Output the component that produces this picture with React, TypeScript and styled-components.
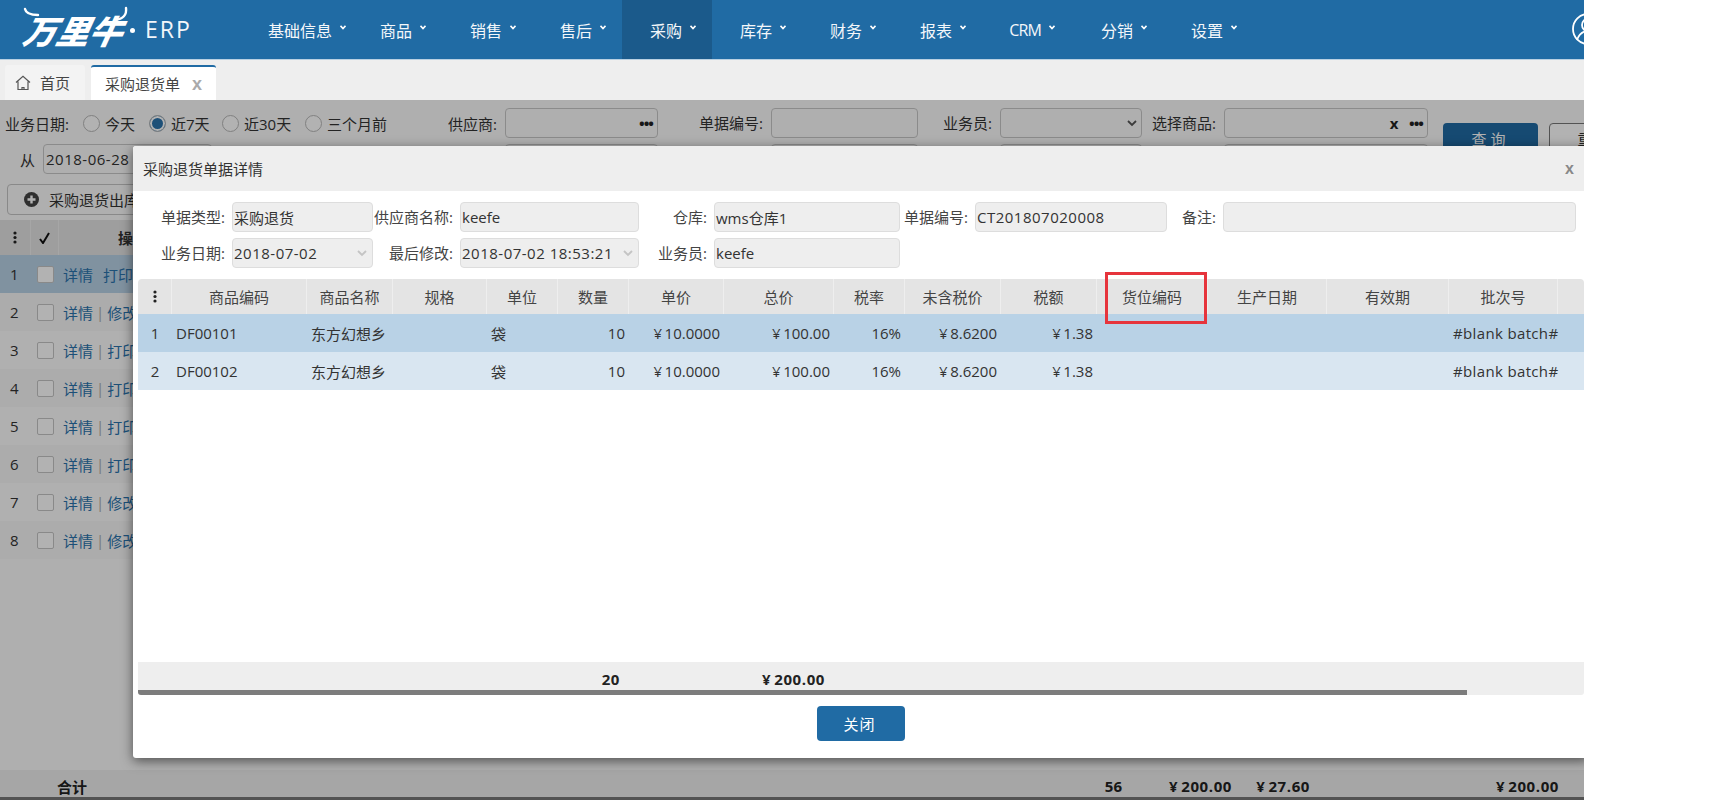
import React from "react";
import styled, { createGlobalStyle } from "styled-components";

const FONT = `"Open Sans", "Noto Sans CJK SC", sans-serif`;
const MODAL_COLS = "34px 135px 86px 94px 71px 71px 95px 110px 71px 96px 96px 111px 119px 122px 109px 26px";

const Global = createGlobalStyle`
  html, body { margin: 0; padding: 0; background: #fff; }
  body { font-family: ${FONT}; font-size: 15px; color: #333; }
`;

const Page = styled.div`
  position: relative;
  width: 1584px;
  height: 800px;
  overflow: hidden;
  background: #fbfbfb;
`;

const Header = styled.header`
  display: flex;
  height: 60px;
  background: #206ba4;
  border-bottom: 1px solid #b9d0e2;
  box-sizing: border-box;
  color: #fff;
`;

const Logo = styled.div`
  position: relative;
  width: 240px;
  flex: none;
  display: flex;
  align-items: center;
  padding-left: 24px;
  box-sizing: border-box;
`;

const LogoMark = styled.span`
  font: italic 900 33px/1 "Noto Sans CJK SC", sans-serif;
  letter-spacing: 0;
  transform: skewX(-12deg);
  color: #fff;
  margin-top: 2px;
`;

const LogoSwoosh = styled.svg`
  position: absolute;
  left: 20px;
  top: 6px;
`;

const LogoDot = styled.span`
  width: 5px;
  height: 5px;
  border-radius: 50%;
  background: #fff;
  margin: 2px 10px 0 7px;
`;

const LogoErp = styled.span`
  font: 400 23px/1 "Open Sans", sans-serif;
  color: #f2f6fa;
  letter-spacing: 2px;
`;

const NavItem = styled.div<{ $active?: boolean; $tight?: boolean; $latin?: boolean }>`
  display: flex;
  align-items: center;
  height: 59px;
  padding: 0 ${(p) => (p.$tight ? 6 : p.$latin ? 18 : 16)}px 0 ${(p) => (p.$latin ? 27 : 28)}px;
  background: ${(p) => (p.$active ? "#1b5a8b" : "transparent")};
  font-size: 16px;
  letter-spacing: ${(p) => (p.$latin ? "-.8px" : "0")};
  color: #f4f7fa;
`;

const NavCaret = styled.svg`
  margin-left: 8px;
  margin-top: -4px;
`;

const Avatar = styled.svg`
  margin: 13px -20px 0 auto;
  flex: none;
`;

const TabBar = styled.div`
  display: flex;
  align-items: flex-end;
  height: 40px;
  background: #eeeeee;
  padding-left: 5px;
  gap: 6px;
  box-sizing: border-box;
`;

const HomeTab = styled.div`
  display: flex;
  align-items: center;
  gap: 9px;
  width: 80px;
  height: 35px;
  padding-left: 10px;
  box-sizing: border-box;
  background: #f3f3f3;
  border-radius: 3px 3px 0 0;
  color: #444;
`;

const ActiveTab = styled.div`
  display: flex;
  align-items: center;
  width: 125px;
  height: 35px;
  padding-left: 14px;
  box-sizing: border-box;
  background: #fff;
  border-top: 2px solid #206ba4;
  border-radius: 3px 3px 0 0;
  color: #444;
`;

const TabClose = styled.span`
  margin-left: 12px;
  font: 700 18px/1 "Liberation Sans", sans-serif;
  color: #aaa;
`;

const Backdrop = styled.div`
  display: flex;
  flex-direction: column;
  height: 700px;
`;

const Filter = styled.div`
  display: grid;
  grid-template-columns: 505px 153px 113px 147px 82px 142px 82px 204px 15px 95px 11px 95px;
  grid-auto-rows: 30px;
  row-gap: 6px;
  padding-top: 8px;
`;

const RadioGroup = styled.div`
  display: flex;
  align-items: center;
  padding-left: 5px;
  white-space: nowrap;
`;

const RangeGroup = styled.div`
  grid-row: 2;
  grid-column: 1;
  display: flex;
  align-items: center;
  padding-left: 20px;
  gap: 8px;
`;

const RadioLabel = styled.span`
  width: 78px;
  flex: none;
`;

const SupplierLabel = styled.span`
  margin-left: auto;
  padding-right: 8px;
`;

const Radio = styled.span<{ $on?: boolean }>`
  width: 17px;
  height: 17px;
  box-sizing: border-box;
  border: 1px solid #b8b8b8;
  border-radius: 50%;
  background: ${(p) => (p.$on ? "#2a73ad" : "#fff")};
  box-shadow: ${(p) => (p.$on ? "inset 0 0 0 2px #fff" : "none")};
  margin-right: 5px;
  flex: none;
`;

const RadioText = styled.span<{ $w: number }>`
  width: ${(p) => p.$w}px;
  flex: none;
`;

const FilterLabel = styled.span`
  text-align: right;
  padding-right: 8px;
  line-height: 30px;
`;

const FilterInput = styled.div<{ $w?: number; $col?: number }>`
  display: flex;
  align-items: center;
  justify-content: flex-end;
  box-sizing: border-box;
  height: 30px;
  width: ${(p) => (p.$w ? `${p.$w}px` : "auto")};
  grid-column: ${(p) => p.$col ?? "auto"};
  padding: 0 4px 0 2px;
  border: 1px solid #c8c8c8;
  border-radius: 4px;
  background: #fbfbfb;
  font-weight: 700;
  font-size: 15px;
  letter-spacing: -1px;
  color: #222;
  white-space: pre;
`;

const DateText = styled.span`
  margin-right: auto;
  font-weight: 400;
  font-size: 15px;
  letter-spacing: .5px;
  color: #333;
`;

const QueryButton = styled.div`
  grid-row: 1 / 3;
  grid-column: 10;
  margin-top: 15px;
  height: 30px;
  background: #206ba4;
  color: #fff;
  border-radius: 4px;
  display: flex;
  align-items: center;
  justify-content: center;
  letter-spacing: 4px;
  white-space: nowrap;
`;

const ResetButton = styled(QueryButton)`
  grid-column: 12;
  background: #fff;
  color: #333;
  border: 1px solid #777;
  box-sizing: border-box;
`;

const Toolbar = styled.div`
  padding: 10px 0 5px 7px;
`;

const ToolButton = styled.div`
  display: flex;
  align-items: center;
  gap: 10px;
  width: 160px;
  height: 31px;
  box-sizing: border-box;
  padding-left: 16px;
  border: 1px solid #c4c4c4;
  border-radius: 4px;
  background: #fbfbfb;
  white-space: nowrap;
`;

const BgHead = styled.div`
  display: grid;
  grid-template-columns: 31px 28px 1fr;
  height: 35px;
  background: #e3e3e3;
  align-items: center;
`;

const BgHeadCell = styled.div<{ $pad?: number }>`
  height: 100%;
  display: flex;
  align-items: center;
  justify-content: ${(p) => (p.$pad ? "flex-start" : "center")};
  padding-left: ${(p) => p.$pad ?? 0}px;
  border-right: 1px solid #eee;
  font-weight: 700;
`;

const BgRow = styled.div<{ $sel?: boolean; $even?: boolean }>`
  display: flex;
  align-items: center;
  height: 38px;
  flex: none;
  background: ${(p) => (p.$sel ? "#b8d1e5" : p.$even ? "#f6f6f6" : "#fcfcfc")};
`;

const BgIndex = styled.span`
  width: 37px;
  padding-left: 10px;
  box-sizing: border-box;
  flex: none;
`;

const BgCheck = styled.span`
  width: 17px;
  height: 17px;
  box-sizing: border-box;
  border: 1px solid #c4c4c4;
  border-radius: 2px;
  background: #fff;
  flex: none;
  margin-right: 9px;
`;

const BgLink = styled.span`
  color: #2a73ad;
  white-space: nowrap;
`;

const BgSep = styled.span`
  color: #aaa;
  margin: 0 3px;
`;

const BgSpacer = styled.div`
  flex: 1;
`;

const SumRow = styled.div`
  display: grid;
  grid-template-columns: 1122px 110px 78px 249px;
  height: 27px;
  padding-top: 5px;
  box-sizing: border-box;
  flex: none;
  align-items: center;
  background: #eeeeee;
  font-weight: 700;
  color: #222;
`;

const SumFirst = styled.div`
  display: flex;
  justify-content: space-between;
  padding-left: 57px;
`;

const SumValue = styled.div`
  text-align: right;
  letter-spacing: .6px;
`;

const BgScroll = styled.div`
  height: 3px;
  flex: none;
  background: #777;
`;

const Overlay = styled.div`
  position: absolute;
  left: 0;
  right: 0;
  top: 100px;
  bottom: 0;
  background: rgba(0, 0, 0, 0.3);
`;

const Modal = styled.div`
  position: absolute;
  left: 133px;
  top: 146px;
  width: 1456px;
  height: 612px;
  display: flex;
  flex-direction: column;
  background: #fff;
  border-radius: 3px;
  box-shadow: 0 3px 12px rgba(0, 0, 0, 0.55);
`;

const ModalTitle = styled.div`
  display: flex;
  align-items: center;
  justify-content: space-between;
  height: 45px;
  flex: none;
  padding: 0 15px 0 10px;
  background: #eeeeee;
  border-radius: 3px 3px 0 0;
`;

const ModalClose = styled.span`
  font: 700 16px/1 "Liberation Sans", sans-serif;
  color: #888;
`;

const Form = styled.div`
  display: grid;
  grid-template-columns: 99px 141px 87px 179px 75px 186px 75px 192px 56px 353px;
  grid-auto-rows: 30px;
  row-gap: 6px;
  padding-top: 11px;
  flex: none;
`;

const FormLabel = styled.span`
  text-align: right;
  padding-right: 7px;
  line-height: 30px;
  white-space: nowrap;
  color: #444;
`;

const FormInput = styled.div<{ $num?: boolean }>`
  display: flex;
  align-items: center;
  justify-content: space-between;
  box-sizing: border-box;
  height: 30px;
  padding: 0 5px 0 1px;
  background: #eeeeee;
  border: 1px solid #dddddd;
  border-radius: 4px;
  color: #333;
  white-space: nowrap;
  letter-spacing: ${(p) => (p.$num ? ".5px" : "0")};
`;

const DetailGrid = styled.div`
  margin: 11px 0 0 5px;
  width: 1446px;
  height: 416px;
  flex: none;
  display: flex;
  flex-direction: column;
`;

const GridRow = styled.div<{ $bg: string; $h: number }>`
  display: grid;
  grid-template-columns: ${MODAL_COLS};
  height: ${(p) => p.$h}px;
  flex: none;
  background: ${(p) => p.$bg};
  align-items: center;
`;

const HeadRow = styled(GridRow)`
  border-radius: 4px 4px 0 0;
`;

const HeadCell = styled.div`
  position: relative;
  height: 100%;
  display: flex;
  align-items: center;
  justify-content: center;
  border-right: 1px solid #eeeeee;
  box-sizing: border-box;
  color: #444;
  &:last-child { border-right: 0; }
`;

const RedBox = styled.span`
  position: absolute;
  left: 8px;
  right: 0;
  top: -7px;
  bottom: -10px;
  border: 3px solid #e6343c;
`;

const Cell = styled.div<{ $align?: string; $wide?: boolean }>`
  text-align: ${(p) => p.$align ?? "left"};
  padding: 0 4px;
  white-space: nowrap;
  color: #333;
  letter-spacing: ${(p) => (p.$wide ? ".35px" : "0")};
`;

const Filler = styled.div`
  flex: 1;
`;

const Footer = styled.div`
  position: relative;
  height: 33px;
  flex: none;
`;

const FooterCells = styled(GridRow)`
  height: 33px;
  box-sizing: border-box;
  border-radius: 0 0 3px 3px;
`;

const FootCell = styled.div`
  text-align: right;
  padding-right: 9px;
  font-weight: 700;
  color: #222;
  white-space: nowrap;
  letter-spacing: .6px;
`;

const ScrollThumb = styled.div`
  position: absolute;
  left: 0;
  bottom: 0;
  width: 1329px;
  height: 5px;
  background: #7c7c7c;
  border-radius: 0 0 0 3px;
`;

const ModalActions = styled.div`
  display: flex;
  justify-content: center;
  padding-top: 11px;
`;

const CloseButton = styled.div`
  width: 88px;
  height: 35px;
  display: flex;
  align-items: center;
  justify-content: center;
  padding-right: 3px;
  box-sizing: border-box;
  background: #206ba4;
  color: #fff;
  border-radius: 4px;
  letter-spacing: 1px;
`;

const Kebab = () => (
  <svg width="4" height="13" viewBox="0 0 4 13" fill="#222">
    <circle cx="2" cy="2" r="1.6" />
    <circle cx="2" cy="6.5" r="1.6" />
    <circle cx="2" cy="11" r="1.6" />
  </svg>
);

const Chevron = ({ c }: { c: string }) => (
  <svg width="10" height="7" viewBox="0 0 10 7" fill="none" stroke={c} strokeWidth="1.8">
    <path d="M1 1l4 4 4-4" />
  </svg>
);

const Caret = () => (
  <NavCaret width="6" height="5" viewBox="0 0 6 5" fill="none" stroke="#fff" strokeWidth="1.6">
    <path d="M.5 .8L3 3.6 5.5 .8" />
  </NavCaret>
);

const navItems = ["基础信息", "商品", "销售", "售后", "采购", "库存", "财务", "报表", "CRM", "分销", "设置"];
const bgRows: [string, string][] = [
  ["1", "打印"], ["2", "修改"], ["3", "打印"], ["4", "打印"],
  ["5", "打印"], ["6", "打印"], ["7", "修改"], ["8", "修改"],
];
const heads = ["商品编码", "商品名称", "规格", "单位", "数量", "单价", "总价", "税率", "未含税价", "税额", "货位编码", "生产日期", "有效期", "批次号", ""];
const YEN = "¥\u2009";
const lines = [
  ["1", "DF00101", "东方幻想乡", "", "袋", "10", `${YEN}10.0000`, `${YEN}100.00`, "16%", `${YEN}8.6200`, `${YEN}1.38`, "", "", "", "#blank batch#", ""],
  ["2", "DF00102", "东方幻想乡", "", "袋", "10", `${YEN}10.0000`, `${YEN}100.00`, "16%", `${YEN}8.6200`, `${YEN}1.38`, "", "", "", "#blank batch#", ""],
];
const rightCols = new Set([5, 6, 7, 8, 9, 10]);

export default function App() {
  return (
    <>
      <Global />
      <Page>
        <Header>
          <Logo>
            <LogoMark>万里牛</LogoMark>
            <LogoSwoosh width="110" height="24" viewBox="0 0 110 24" fill="none" stroke="#fff" strokeWidth="2.4" strokeLinecap="round">
              <path d="M5 3c1 5 6 6 13 6" />
              <path d="M106 2c1 7-3 11-11 12" />
            </LogoSwoosh>
            <LogoDot />
            <LogoErp>ERP</LogoErp>
          </Logo>
          {navItems.map((n, i) => (
            <NavItem key={n} $active={n === "采购"} $tight={i === 0} $latin={n === "CRM"}>
              {n}
              <Caret />
            </NavItem>
          ))}
          <Avatar width="32" height="32" viewBox="0 0 32 32" fill="none" stroke="#fff" strokeWidth="1.8">
            <circle cx="16" cy="16" r="15" />
            <circle cx="16" cy="12" r="6" />
            <path d="M5 27c2-6 6-9 11-9s9 3 11 9" />
          </Avatar>
        </Header>
        <TabBar>
          <HomeTab>
            <svg width="16" height="16" viewBox="0 0 16 16" fill="none" stroke="#555" strokeWidth="1.2">
              <path d="M1 7.5L8 1.2l7 6.3M3 6.5v8h10v-8" />
              <path d="M7 14.5v-2h2v2" />
            </svg>
            首页
          </HomeTab>
          <ActiveTab>
            采购退货单
            <TabClose>x</TabClose>
          </ActiveTab>
        </TabBar>
        <Backdrop>
          <Filter>
            <RadioGroup>
              <RadioLabel>业务日期:</RadioLabel>
              <Radio /><RadioText $w={44}>今天</RadioText>
              <Radio $on /><RadioText $w={51}>近7天</RadioText>
              <Radio /><RadioText $w={61}>近30天</RadioText>
              <Radio /><RadioText $w={62}>三个月前</RadioText>
              <SupplierLabel>供应商:</SupplierLabel>
            </RadioGroup>
            <FilterInput>•••</FilterInput>
            <FilterLabel>单据编号:</FilterLabel>
            <FilterInput />
            <FilterLabel>业务员:</FilterLabel>
            <FilterInput><Chevron c="#555" /></FilterInput>
            <FilterLabel>选择商品:</FilterLabel>
            <FilterInput>{"x    •••"}</FilterInput>
            <QueryButton>查询</QueryButton>
            <ResetButton>重置</ResetButton>
            <RangeGroup>
              从
              <FilterInput $w={169}><DateText>2018-06-28</DateText></FilterInput>
            </RangeGroup>
            <FilterInput $col={2} />
            <FilterLabel />
            <FilterInput />
            <FilterLabel />
            <FilterInput />
            <FilterLabel />
            <FilterInput />
          </Filter>
          <Toolbar>
            <ToolButton>
              <svg width="15" height="15" viewBox="0 0 15 15">
                <circle cx="7.5" cy="7.5" r="7.5" fill="#444" />
                <path d="M7.5 3.5v8M3.5 7.5h8" stroke="#fff" strokeWidth="2.4" />
              </svg>
              采购退货出库
            </ToolButton>
          </Toolbar>
          <BgHead>
            <BgHeadCell><Kebab /></BgHeadCell>
            <BgHeadCell>
              <svg width="11" height="12" viewBox="0 0 11 12" fill="none" stroke="#111" strokeWidth="2">
                <path d="M1 7l3 4 6-10" />
              </svg>
            </BgHeadCell>
            <BgHeadCell $pad={59}>操作</BgHeadCell>
          </BgHead>
          {bgRows.map(([n, action], i) => (
            <BgRow key={n} $sel={i === 0} $even={i % 2 === 1}>
              <BgIndex>{n}</BgIndex>
              <BgCheck />
              <BgLink>详情</BgLink>
              <BgSep>{i === 0 ? "\u00a0" : "|"}</BgSep>
              <BgLink>{action}</BgLink>
            </BgRow>
          ))}
          <BgSpacer />
          <SumRow>
            <SumFirst>
              <span>合计</span>
              <span>56</span>
            </SumFirst>
            <SumValue>{YEN}200.00</SumValue>
            <SumValue>{YEN}27.60</SumValue>
            <SumValue>{YEN}200.00</SumValue>
          </SumRow>
          <BgScroll />
        </Backdrop>
        <Overlay />
        <Modal>
          <ModalTitle>
            采购退货单据详情
            <ModalClose>x</ModalClose>
          </ModalTitle>
          <Form>
            <FormLabel>单据类型:</FormLabel>
            <FormInput>采购退货</FormInput>
            <FormLabel>供应商名称:</FormLabel>
            <FormInput>keefe</FormInput>
            <FormLabel>仓库:</FormLabel>
            <FormInput>wms仓库1</FormInput>
            <FormLabel>单据编号:</FormLabel>
            <FormInput $num>CT201807020008</FormInput>
            <FormLabel>备注:</FormLabel>
            <FormInput />
            <FormLabel>业务日期:</FormLabel>
            <FormInput $num>2018-07-02<Chevron c="#c4c4c4" /></FormInput>
            <FormLabel>最后修改:</FormLabel>
            <FormInput $num>2018-07-02 18:53:21<Chevron c="#c4c4c4" /></FormInput>
            <FormLabel>业务员:</FormLabel>
            <FormInput>keefe</FormInput>
          </Form>
          <DetailGrid>
            <HeadRow $bg="#e4e4e4" $h={35}>
              <HeadCell><Kebab /></HeadCell>
              {heads.map((h, i) => (
                <HeadCell key={i}>
                  {h}
                  {h === "货位编码" && <RedBox />}
                </HeadCell>
              ))}
            </HeadRow>
            {lines.map((line, r) => (
              <GridRow key={r} $bg={r === 0 ? "#b9d2e6" : "#d9e6f1"} $h={38}>
                {line.map((c, i) => (
                  <Cell key={i} $wide={i === 14} $align={i === 0 ? "center" : rightCols.has(i) ? "right" : "left"}>{c}</Cell>
                ))}
              </GridRow>
            ))}
            <Filler />
            <Footer>
              <FooterCells $bg="#eeeeee" $h={33}>
                {Array.from({ length: 16 }).map((_, i) => (
                  <FootCell key={i}>{i === 5 ? "20" : i === 7 ? `${YEN}200.00` : ""}</FootCell>
                ))}
              </FooterCells>
              <ScrollThumb />
            </Footer>
          </DetailGrid>
          <ModalActions>
            <CloseButton>关闭</CloseButton>
          </ModalActions>
        </Modal>
      </Page>
    </>
  );
}
